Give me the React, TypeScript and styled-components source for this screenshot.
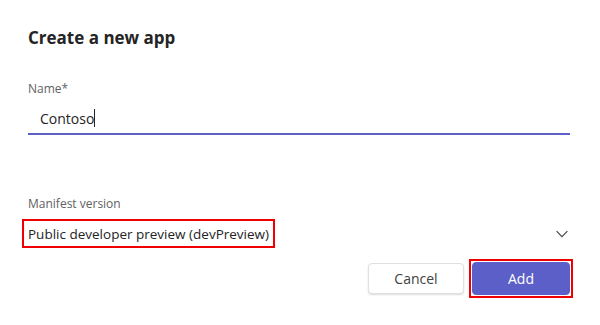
import React from "react";
import styled, { createGlobalStyle } from "styled-components";

const GlobalStyle = createGlobalStyle`
  html, body {
    margin: 0;
    padding: 0;
    background: #ffffff;
  }
  body {
    font-family: "Open Sans", "Noto Sans", "Liberation Sans", sans-serif;
    color: #242424;
  }
`;

const Dialog = styled.div`
  width: 600px;
  height: 325px;
  box-sizing: border-box;
  padding: 27px 27px 0 28px;
  display: flex;
  flex-direction: column;
`;

const Title = styled.h2`
  margin: 0;
  font-size: 17px;
  font-weight: 700;
  line-height: 22px;
  color: #242424;
`;

const Field = styled.div<{ $top: number }>`
  display: flex;
  flex-direction: column;
  margin-top: ${(p) => p.$top}px;
`;

const Label = styled.label`
  font-size: 12px;
  line-height: 16px;
  color: #616161;
`;

const InputWrap = styled.div`
  margin-top: 6px;
  margin-right: 3px;
  height: 32px;
  display: flex;
  align-items: center;
  padding-left: 12px;
  border-bottom: 2px solid #5b5fc7;
  box-sizing: border-box;
`;

const InputText = styled.span`
  font-size: 14px;
  color: #242424;
  display: flex;
  align-items: center;
`;

const Caret = styled.span`
  display: inline-block;
  width: 1px;
  height: 18px;
  background: #242424;
`;

const SelectRow = styled.div`
  margin-top: 7px;
  margin-left: -6px;
  display: flex;
  align-items: center;
  justify-content: space-between;
  height: 29px;
`;

const Highlight = styled.div`
  border: 2px solid #f00000;
  box-sizing: border-box;
  display: flex;
  align-items: center;
`;

const SelectValue = styled(Highlight)`
  height: 29px;
  padding: 0 4px;
  font-size: 13.5px;
  color: #242424;
`;

const Chevron = styled.svg`
  width: 12px;
  height: 12px;
  margin-right: 5px;
`;

const Actions = styled.div`
  margin-top: 11px;
  display: flex;
  justify-content: flex-end;
  align-items: center;
  gap: 5px;
`;

const Button = styled.button<{ $primary?: boolean }>`
  width: ${(p) => (p.$primary ? 98 : 96)}px;
  height: ${(p) => (p.$primary ? 33 : 31)}px;
  border-radius: 4px;
  font-family: inherit;
  font-size: 14px;
  cursor: pointer;
  border: 1px solid ${(p) => (p.$primary ? "#5b5fc7" : "#e0e0e0")};
  background: ${(p) => (p.$primary ? "#5b5fc7" : "#ffffff")};
  color: ${(p) => (p.$primary ? "#ffffff" : "#424242")};
  box-shadow: ${(p) => (p.$primary ? "none" : "0 1px 2px rgba(0,0,0,0.14)")};
`;

const ButtonFrame = styled(Highlight)`
  padding: 1px;
`;

export default function App() {
  return (
    <>
      <GlobalStyle />
      <Dialog>
        <Title>Create a new app</Title>
        <Field $top={32}>
          <Label>Name*</Label>
          <InputWrap>
            <InputText>
              Contoso
              <Caret />
            </InputText>
          </InputWrap>
        </Field>
        <Field $top={61}>
          <Label>Manifest version</Label>
          <SelectRow>
            <SelectValue>Public developer preview (devPreview)</SelectValue>
            <Chevron viewBox="0 0 12 12" fill="none">
              <path d="M0.6 3.2 L6 8.6 L11.4 3.2" stroke="#424242" strokeWidth="1.1" />
            </Chevron>
          </SelectRow>
        </Field>
        <Actions>
          <Button>Cancel</Button>
          <ButtonFrame>
            <Button $primary>Add</Button>
          </ButtonFrame>
        </Actions>
      </Dialog>
    </>
  );
}
